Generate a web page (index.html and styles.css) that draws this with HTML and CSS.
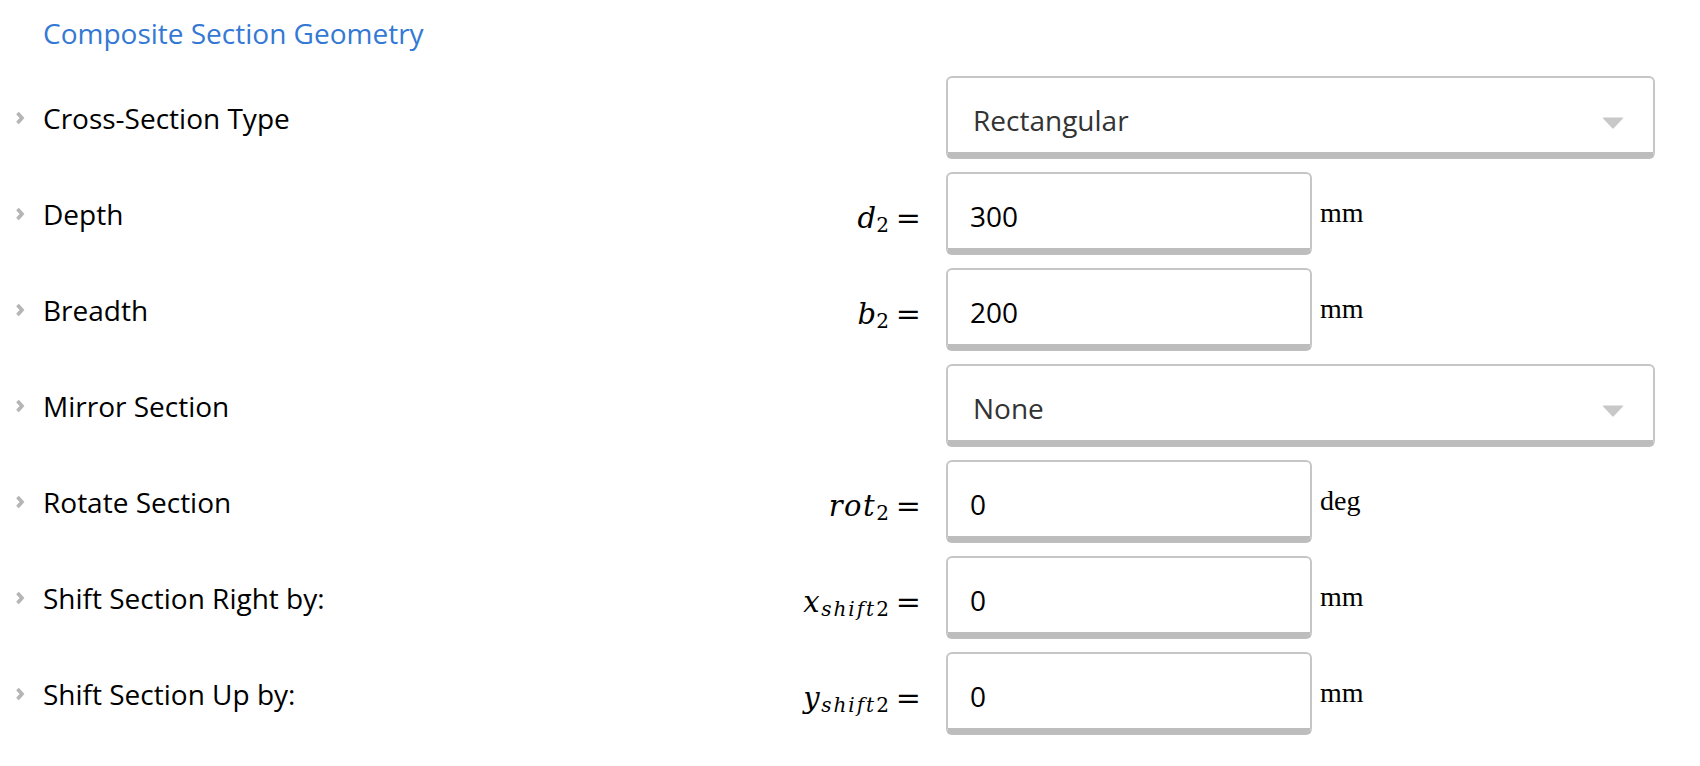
FILE: index.html
```html
<!DOCTYPE html>
<html lang="en">
<head>
    <meta charset="UTF-8">
    <meta name="viewport" content="width=device-width, initial-scale=1.0">
    <title>Composite Section Geometry</title>
    <link rel="stylesheet" href="styles.css">
</head>
<body>

    <!-- composite section inputs -->
    <section class="panel">
        <h2 class="panel-title">Composite Section Geometry</h2>

        <div class="rows">
            <div class="row">
                <span class="chev"><svg width="10" height="14" viewBox="0 0 10 14"><polyline points="2.5,2 7,7 2.5,12" /></svg></span>
                <span class="label">Cross-Section Type</span>
                <div class="control">
                    <div class="select-wrap">
                        <select class="select">
                            <option>Rectangular</option>
                        </select>
                        <svg class="caret" width="22" height="12" viewBox="0 0 22 12"><path d="M1.5 0.5 H20.5 Q21.8 0.5 20.9 1.5 L12 11 Q11 12 10 11 L1.1 1.5 Q0.2 0.5 1.5 0.5 Z" /></svg>
                    </div>
                </div>
            </div>

            <div class="row">
                <span class="chev"><svg width="10" height="14" viewBox="0 0 10 14"><polyline points="2.5,2 7,7 2.5,12" /></svg></span>
                <span class="label">Depth</span>
                <span class="math"><i>d</i><sub>2</sub><span class="eq">=</span></span>
                <div class="control">
                    <input class="field" type="text" value="300">
                    <span class="unit">mm</span>
                </div>
            </div>

            <div class="row">
                <span class="chev"><svg width="10" height="14" viewBox="0 0 10 14"><polyline points="2.5,2 7,7 2.5,12" /></svg></span>
                <span class="label">Breadth</span>
                <span class="math"><i>b</i><sub>2</sub><span class="eq">=</span></span>
                <div class="control">
                    <input class="field" type="text" value="200">
                    <span class="unit">mm</span>
                </div>
            </div>

            <div class="row">
                <span class="chev"><svg width="10" height="14" viewBox="0 0 10 14"><polyline points="2.5,2 7,7 2.5,12" /></svg></span>
                <span class="label">Mirror Section</span>
                <div class="control">
                    <div class="select-wrap">
                        <select class="select">
                            <option>None</option>
                        </select>
                        <svg class="caret" width="22" height="12" viewBox="0 0 22 12"><path d="M1.5 0.5 H20.5 Q21.8 0.5 20.9 1.5 L12 11 Q11 12 10 11 L1.1 1.5 Q0.2 0.5 1.5 0.5 Z" /></svg>
                    </div>
                </div>
            </div>

            <div class="row">
                <span class="chev"><svg width="10" height="14" viewBox="0 0 10 14"><polyline points="2.5,2 7,7 2.5,12" /></svg></span>
                <span class="label">Rotate Section</span>
                <span class="math"><i class="wide">rot</i><sub>2</sub><span class="eq">=</span></span>
                <div class="control">
                    <input class="field" type="text" value="0">
                    <span class="unit">deg</span>
                </div>
            </div>

            <div class="row">
                <span class="chev"><svg width="10" height="14" viewBox="0 0 10 14"><polyline points="2.5,2 7,7 2.5,12" /></svg></span>
                <span class="label">Shift Section Right by:</span>
                <span class="math"><i class="wide">x</i><sub><i>shift</i>2</sub><span class="eq">=</span></span>
                <div class="control">
                    <input class="field" type="text" value="0">
                    <span class="unit">mm</span>
                </div>
            </div>

            <div class="row">
                <span class="chev"><svg width="10" height="14" viewBox="0 0 10 14"><polyline points="2.5,2 7,7 2.5,12" /></svg></span>
                <span class="label">Shift Section Up by:</span>
                <span class="math"><i class="wide">y</i><sub><i>shift</i>2</sub><span class="eq">=</span></span>
                <div class="control">
                    <input class="field" type="text" value="0">
                    <span class="unit">mm</span>
                </div>
            </div>
        </div>
    </section>

</body>
</html>
```

FILE: styles.css
```css
body {
    margin: 0;
    font-family: "Open Sans", Arial, sans-serif;
    background-color: #fff;
    color: #000;
}
.panel {
    padding: 14px 45px 0 0;
}
.panel-title {
    margin: 0 0 24px 43px;
    font-size: 28px;
    line-height: 38px;
    font-weight: normal;
    color: #3479d3;
}
.rows {
    display: flex;
    flex-direction: column;
    gap: 13px;
}
.row {
    display: flex;
    align-items: center;
    height: 83px;
}
/* small expand arrow */
.chev {
    width: 43px;
    box-sizing: border-box;
    padding-left: 15px;
    display: flex;
    align-items: center;
}
.chev polyline {
    fill: none;
    stroke: #b5b5b5;
    stroke-width: 3.6;
}
.label {
    flex: 1;
    font-size: 28px;
    line-height: 38px;
}
/* math labels in front of the inputs */
.math {
    padding: 8px 25px 0 0;
    font-family: "DejaVu Serif", "Liberation Serif", serif;
    font-size: 29px;
    line-height: 34px;
    white-space: nowrap;
}
.math .wide {
    letter-spacing: 1.5px;
}
.math sub {
    font-size: 20px;
    line-height: 0;
    vertical-align: -4px;
}
.math sub i {
    letter-spacing: 2px;
}
.math .eq {
    margin-left: 7px;
    font-size: 30px;
}
.control {
    width: 709px;
    height: 83px;
    display: flex;
    align-items: flex-start;
}
.select-wrap {
    position: relative;
    width: 100%;
}
.select,
.field {
    box-sizing: border-box;
    height: 83px;
    margin: 0;
    border: 2px solid #c6c6c6;
    border-bottom: 7px solid #bdbdbd;
    border-radius: 6px;
    background-color: #fff;
    font-family: "Open Sans", Arial, sans-serif;
    font-size: 28px;
    padding: 10px 0 0 22px;
    color: #000;
    outline: none;
}
.select {
    width: 100%;
    appearance: none;
    -webkit-appearance: none;
    padding-left: 25px;
    color: #333;
}
.caret {
    position: absolute;
    top: 41px;
    right: 31px;
}
.caret path {
    fill: #c8c8c8;
}
.field {
    width: 366px;
}
.unit {
    margin: 26px 0 0 8px;
    font-family: "Liberation Serif", "DejaVu Serif", serif;
    font-size: 28px;
    line-height: 30px;
}
```
